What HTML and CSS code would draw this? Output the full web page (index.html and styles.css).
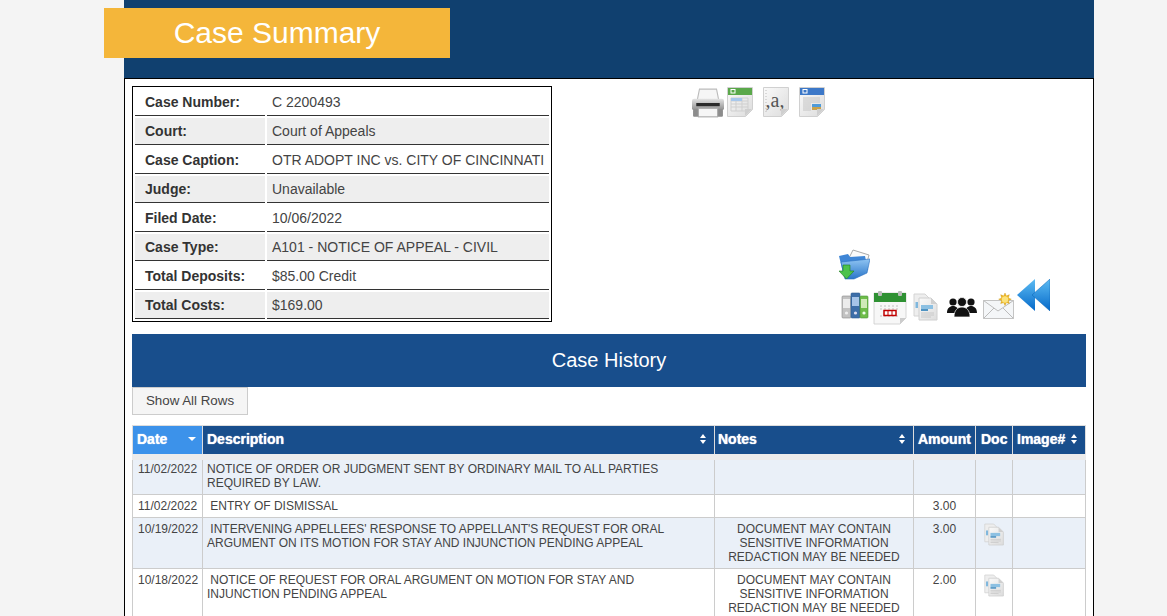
FILE: index.html
```html
<!DOCTYPE html>
<html lang="en">
<head>
<meta charset="utf-8">
<title>Case Summary</title>
<link rel="stylesheet" href="styles.css">
</head>
<body>
<svg class="defs" width="0" height="0" aria-hidden="true">
  <defs>
    <linearGradient id="docg" x1="0" y1="0" x2="1" y2="1"><stop offset="0" stop-color="#fafafa"/><stop offset="1" stop-color="#dcdcdc"/></linearGradient>
    <linearGradient id="blueg" x1="0" y1="0" x2="0" y2="1"><stop offset="0" stop-color="#8fc4f2"/><stop offset="1" stop-color="#2a76c9"/></linearGradient>
    <linearGradient id="arrowg" x1="0" y1="0" x2="0" y2="1"><stop offset="0" stop-color="#5dbcf3"/><stop offset="1" stop-color="#0569c9"/></linearGradient>
    <linearGradient id="printg" x1="0" y1="0" x2="0" y2="1"><stop offset="0" stop-color="#e4e4e4"/><stop offset="1" stop-color="#8c8c8c"/></linearGradient>
    <symbol id="docs" viewBox="0 0 26 28">
      <path d="M1 1h11l6 6v16H1z" fill="#eee" stroke="#d4d4d4"/>
      <path d="M6 5h12l6 6v16H6z" fill="url(#docg)" stroke="#d0d0d0"/>
      <path d="M18 5v6h6z" fill="#cfcfcf"/>
      <rect x="8" y="12" width="12" height="4" fill="#8cc0e2"/>
      <rect x="8" y="16" width="7" height="2" fill="#4f93c2"/>
      <path d="M8 20h13M8 22h13M8 24h10" stroke="#c8c8c8"/>
      <rect x="2.500" y="9" width="2.500" height="6" fill="#7fb7dd"/>
    </symbol>
  </defs>
</svg>
<div class="page">
  <header class="banner">
    <h1 class="title">Case Summary</h1>
  </header>
  <main class="content">
    <section class="top">
      <table class="summary">
        <tr><th>Case Number:</th><td>C 2200493</td></tr>
        <tr class="shade"><th>Court:</th><td>Court of Appeals</td></tr>
        <tr><th>Case Caption:</th><td>OTR ADOPT INC vs. CITY OF CINCINNATI</td></tr>
        <tr class="shade"><th>Judge:</th><td>Unavailable</td></tr>
        <tr><th>Filed Date:</th><td>10/06/2022</td></tr>
        <tr class="shade"><th>Case Type:</th><td>A101 - NOTICE OF APPEAL - CIVIL</td></tr>
        <tr><th>Total Deposits:</th><td>$85.00 Credit</td></tr>
        <tr class="shade"><th>Total Costs:</th><td>$169.00</td></tr>
      </table>
      <div class="tools">
        <div class="export-icons">
          <svg class="ic printer" width="32" height="30" viewBox="1 1 30 28">
            <path d="M8 2h16l2 10H6z" fill="#f6f6f6" stroke="#bbb"/>
            <rect x="1" y="11" width="30" height="11" rx="2" fill="url(#printg)"/>
            <rect x="5" y="15" width="22" height="3" fill="#2b2b2b"/>
            <rect x="2" y="21" width="28" height="7" rx="1" fill="#8c8c8c"/>
            <rect x="7" y="20" width="18" height="8" fill="#f6f6f6" stroke="#aaa"/>
          </svg>
          <svg class="ic sheet" width="26" height="30" viewBox="0 0 26 30">
            <path d="M.5.5h25v22l-7 7H.5z" fill="url(#docg)" stroke="#d0d0d0"/>
            <rect x="1" y="1" width="24" height="7" fill="#5aa84a"/>
            <rect x="4" y="2.500" width="4" height="3.500" fill="none" stroke="#fff"/>
            <path d="M4 11h17v13H4zM4 14h17M4 17h17M4 20h17M9 11v13M15 11v13" fill="none" stroke="#cfcfcf"/>
            <rect x="4" y="11" width="11" height="3" fill="#a8c8ec"/>
            <path d="M18 29l7-7h-7z" fill="#cfcfcf"/>
          </svg>
          <svg class="ic spaced" width="26" height="30" viewBox="0 0 26 30">
            <path d="M.5.5h25v22l-7 7H.5z" fill="url(#docg)" stroke="#d0d0d0"/>
            <path d="M3 3v24" stroke="#bbb" stroke-dasharray="1 2"/>
            <text x="2.500" y="20" class="comma">,a,</text>
            <path d="M18 29l7-7h-7z" fill="#cfcfcf"/>
          </svg>
          <svg class="ic spaced" width="26" height="30" viewBox="0 0 26 30">
            <path d="M.5.5h25v22l-7 7H.5z" fill="url(#docg)" stroke="#d0d0d0"/>
            <rect x="1" y="1" width="24" height="7" fill="#3c78c8"/>
            <rect x="4" y="2.500" width="4" height="3.500" fill="none" stroke="#fff"/>
            <path d="M4 11h17M4 13h17M4 15h17M4 17h8M4 19h8M4 21h8M4 23h8" stroke="#c4c4c4"/>
            <rect x="13" y="17" width="9" height="6" fill="#c9a24a"/>
            <rect x="13" y="17" width="9" height="3" fill="#4f9bd9"/>
            <path d="M18 29l7-7h-7z" fill="#cfcfcf"/>
          </svg>
        </div>
        <div class="case-icons">
          <svg class="ic" width="32" height="31" viewBox="0 0 32 31">
            <path d="M11 9L15 1l16 5-3 11z" fill="#fafafa" stroke="#aaa"/>
            <path d="M1 7l9-2 2 3 15-1 3 14-24 7z" fill="#3f86d6"/>
            <path d="M3 13l29-3-3 14-13 6H7z" fill="url(#blueg)" stroke="#2a6fc0" stroke-width=".6"/>
            <path d="M1 22h4v-6h7v6h4l-7.500 8z" fill="#4cc24c" stroke="#1f7f1f" stroke-width=".6"/>
          </svg>
          <div class="icon-row">
            <svg class="ic binder" width="30" height="30" viewBox="0 0 30 30">
              <rect x="1" y="4" width="9" height="22" rx="1" fill="#c2c2c2" stroke="#888" stroke-width=".6"/>
              <rect x="10" y="1" width="9" height="25" rx="1" fill="#3d6ea8" stroke="#2d5a90" stroke-width=".6"/>
              <rect x="19" y="4" width="8" height="22" rx="1" fill="#6ebd4a" stroke="#4b943a" stroke-width=".6"/>
              <rect x="2" y="7" width="7" height="9" fill="#ececec"/>
              <rect x="11" y="5" width="7" height="9" fill="#a6c4e8"/>
              <rect x="20" y="7" width="6" height="9" fill="#cfeab8"/>
              <circle cx="5.500" cy="21" r="1.600" fill="#eee"/><circle cx="14.500" cy="21" r="1.600" fill="#dde"/><circle cx="23" cy="21" r="1.600" fill="#efe"/>
            </svg>
            <svg class="ic calendar" width="34" height="34" viewBox="0 0 34 34">
              <path d="M1 2h32v25l-6 6H1z" fill="#f7f7f7" stroke="#ccc" stroke-width=".8"/>
              <rect x="1" y="2" width="32" height="9" fill="#2f9133"/>
              <rect x="5" y="0" width="4" height="5" rx="1" fill="#bbb"/>
              <rect x="25" y="0" width="4" height="5" rx="1" fill="#bbb"/>
              <path d="M7 15h20M7 18h20M7 25h20" stroke="#dcdcdc" stroke-dasharray="2 2" stroke-width="2"/>
              <rect x="11" y="19.500" width="12" height="5" fill="#fff" stroke="#c00000" stroke-width="1.500"/>
              <path d="M15 19.500v5M19 19.500v5" stroke="#c00000"/>
              <path d="M27 33l6-6h-6z" fill="#ccc"/>
            </svg>
            <svg class="ic docs-big" width="26" height="28"><use href="#docs"/></svg>
            <svg class="ic people" width="30" height="22" viewBox="0 0 30 22">
              <circle cx="6" cy="6" r="3.600" fill="#111"/><circle cx="24" cy="6" r="3.600" fill="#111"/>
              <path d="M0 17c0-5 3-7 6-7s6 2 6 7zM18 17c0-5 3-7 6-7s6 2 6 7z" fill="#111"/>
              <circle cx="15" cy="6" r="4.500" fill="#111" stroke="#fff" stroke-width=".7"/>
              <path d="M7 21c0-7 4-10 8-10s8 3 8 10z" fill="#111" stroke="#fff" stroke-width=".7"/>
            </svg>
            <svg class="ic mail" width="31" height="26" viewBox="0 0 31 26">
              <path d="M.5 7.500h30v18H.5z" fill="#f4f6f8" stroke="#c4c4c4"/>
              <path d="M.5 7.500L15 18 30.500 7.500M.5 25.500L11 15M30.500 25.500L20 15" fill="none" stroke="#bbb"/>
              <path d="M22 0l1.300 3 3-1.300-1 3.200 3 1.300-3 1.300 1 3-3-1-1.300 3-1.300-3-3 1 1-3-3-1.300 3-1.300-1-3.200 3 1.300z" fill="#f3b91f" stroke="#c58f10" stroke-width=".4"/>
              <circle cx="22" cy="6.500" r="3.200" fill="#fbe27b"/>
            </svg>
            <svg class="ic rewind" width="33" height="32" viewBox="0 0 33 32">
              <path d="M0 16L18 0v32z" fill="url(#arrowg)"/>
              <path d="M15 16L33 0v32z" fill="url(#arrowg)" stroke="#0b62b5" stroke-width=".5"/>
            </svg>
          </div>
        </div>
      </div>
    </section>
    <h2 class="history-title">Case History</h2>
    <button class="show-all" type="button">Show All Rows</button>
    <table class="history">
      <colgroup>
        <col class="c-date"><col class="c-desc"><col class="c-notes"><col class="c-amt"><col class="c-doc"><col class="c-img">
      </colgroup>
      <thead>
        <tr>
          <th class="active"><span class="hd">Date<i class="caret"></i></span></th>
          <th><span class="hd">Description<i class="updown"></i></span></th>
          <th class="th-notes"><span class="hd">Notes<i class="updown"></i></span></th>
          <th><span class="hd">Amount</span></th>
          <th class="th-doc"><span class="hd">Doc</span></th>
          <th><span class="hd">Image#<i class="updown"></i></span></th>
        </tr>
      </thead>
      <tbody>
        <tr class="odd first">
          <td>11/02/2022</td>
          <td class="desc">NOTICE OF ORDER OR JUDGMENT SENT BY ORDINARY MAIL TO ALL PARTIES REQUIRED BY LAW.</td>
          <td></td><td></td><td></td><td></td>
        </tr>
        <tr>
          <td>11/02/2022</td>
          <td class="desc">&nbsp;ENTRY OF DISMISSAL</td>
          <td></td><td class="num">3.00</td><td></td><td></td>
        </tr>
        <tr class="odd">
          <td>10/19/2022</td>
          <td class="desc">&nbsp;INTERVENING APPELLEES' RESPONSE TO APPELLANT'S REQUEST FOR ORAL ARGUMENT ON ITS MOTION FOR STAY AND INJUNCTION PENDING APPEAL</td>
          <td class="note">DOCUMENT MAY CONTAIN SENSITIVE INFORMATION REDACTION MAY BE NEEDED</td>
          <td class="num">3.00</td>
          <td class="doc"><svg width="21" height="23"><use href="#docs"/></svg></td>
          <td></td>
        </tr>
        <tr>
          <td>10/18/2022</td>
          <td class="desc">&nbsp;NOTICE OF REQUEST FOR ORAL ARGUMENT ON MOTION FOR STAY AND INJUNCTION PENDING APPEAL</td>
          <td class="note">DOCUMENT MAY CONTAIN SENSITIVE INFORMATION REDACTION MAY BE NEEDED</td>
          <td class="num">2.00</td>
          <td class="doc"><svg width="21" height="23"><use href="#docs"/></svg></td>
          <td></td>
        </tr>
      </tbody>
    </table>
  </main>
</div>
</body>
</html>
```
FILE: styles.css
```css
* { box-sizing: border-box; }
html, body { height: 616px; overflow: hidden; }
body {
  margin: 0;
  background: #f4f4f4;
  font-family: "Liberation Sans", Arial, sans-serif;
  color: #333;
}
.defs { position: absolute; }
.page { width: 970px; margin-left: 124px; background: #fff; }
.banner { height: 79px; background: #10406f; padding-top: 8px; }
.title {
  width: 346px;
  height: 50px;
  margin: 0 0 0 -20px;
  background: #f4b63a;
  color: #fff;
  font-size: 30px;
  font-weight: 400;
  line-height: 50px;
  text-align: center;
}
.content {
  border: 1px solid #000;
  border-bottom: 0;
  margin-top: -1px;
  padding: 7px 7px 0;
  height: 538px;
  overflow: hidden;
}
.top { display: flex; height: 248px; }
.summary {
  width: 420px;
  height: 236px;
  border: 1px solid #000;
  border-spacing: 2px;
  font-size: 14px;
  flex: none;
}
.summary th, .summary td {
  height: 27px;
  padding: 0;
  border-bottom: 1px solid #333;
  text-align: left;
  vertical-align: middle;
  color: #444;
}
.summary th { width: 130px; padding-left: 10px; font-weight: 700; color: #333; }
.summary td { padding-left: 5px; }
.shade th, .shade td { background: #eee; }
.tools { flex: 1; }
.ic { display: block; flex: none; }
.export-icons { display: flex; align-items: flex-start; margin: 1px 0 0 140px; height: 40px; }
.sheet { margin-left: 3px; }
.spaced { margin-left: 10px; }
.printer { margin-top: 1px; }
.case-icons { margin: 122px 0 0 286px; }
.icon-row { display: flex; align-items: flex-start; margin: 11px 0 0 3px; }
.comma { font-family: "Liberation Serif", serif; font-size: 20px; fill: #555; }
.binder { margin-top: 1px; }
.calendar { margin-left: 2px; }
.docs-big { margin: 2px 0 0 6px; }
.people { margin: 5px 0 0 8px; }
.mail { margin: 2px 0 0 6px; }
.rewind { margin: -12px 0 0 3px; }
.history-title {
  margin: 0;
  height: 53px;
  background: #184e8c;
  color: #fff;
  font-size: 20px;
  font-weight: 400;
  line-height: 53px;
  text-align: center;
}
.show-all {
  display: block;
  width: 116px;
  height: 28px;
  margin: 0;
  background: #f5f5f5;
  border: 1px solid #ccc;
  color: #444;
  font: 13.333px/24px "Liberation Sans", Arial, sans-serif;
  padding: 0;
}
.history {
  width: 953px;
  margin-top: 10px;
  border-collapse: collapse;
  table-layout: fixed;
  font-size: 12px;
  color: #444;
}
.c-date { width: 70px; }
.c-desc { width: 512px; }
.c-notes { width: 199px; }
.c-amt { width: 62px; }
.c-doc { width: 37px; }
.c-img { width: 73px; }
.history th {
  height: 27px;
  padding: 0 7px 2px 4px;
  background: #184e8c;
  border: 1px solid #ddd;
  border-bottom: 6px solid #ececec;
  color: #fff;
  font-size: 14px;
  font-weight: 700;
  text-align: left;
  text-shadow: 0 0 1px #fff;
}
.history thead tr { height: 31px; }
.history th.active { background: #3c92ea; padding-right: 4px; }
.history th.th-notes { padding-left: 3px; }
.history th.th-doc { padding-left: 5px; }
.hd { display: flex; align-items: center; justify-content: space-between; white-space: nowrap; }
.caret { width: 0; height: 0; margin-right: 2px; border: 4px solid transparent; border-top: 4px solid #fff; border-bottom: 0; }
.updown { position: relative; width: 7px; height: 10px; }
.updown::before, .updown::after { content: ""; position: absolute; left: 0; border: 3.500px solid transparent; }
.updown::before { top: 0; border-top: 0; border-bottom: 4px solid #fff; }
.updown::after { bottom: 0; border-bottom: 0; border-top: 4px solid #fff; }
.history td {
  padding: 4px;
  border: 1px solid #ccc;
  line-height: 14px;
  vertical-align: top;
}
.history td:first-child { white-space: nowrap; padding-left: 5px; }
.first td { border-top: 0; height: 37px; padding-top: 2px; }
.odd td { background: #eaf0f8; }
.num, .note { text-align: center; }
.doc svg { display: block; margin: 1px 0 0 4px; }
```
